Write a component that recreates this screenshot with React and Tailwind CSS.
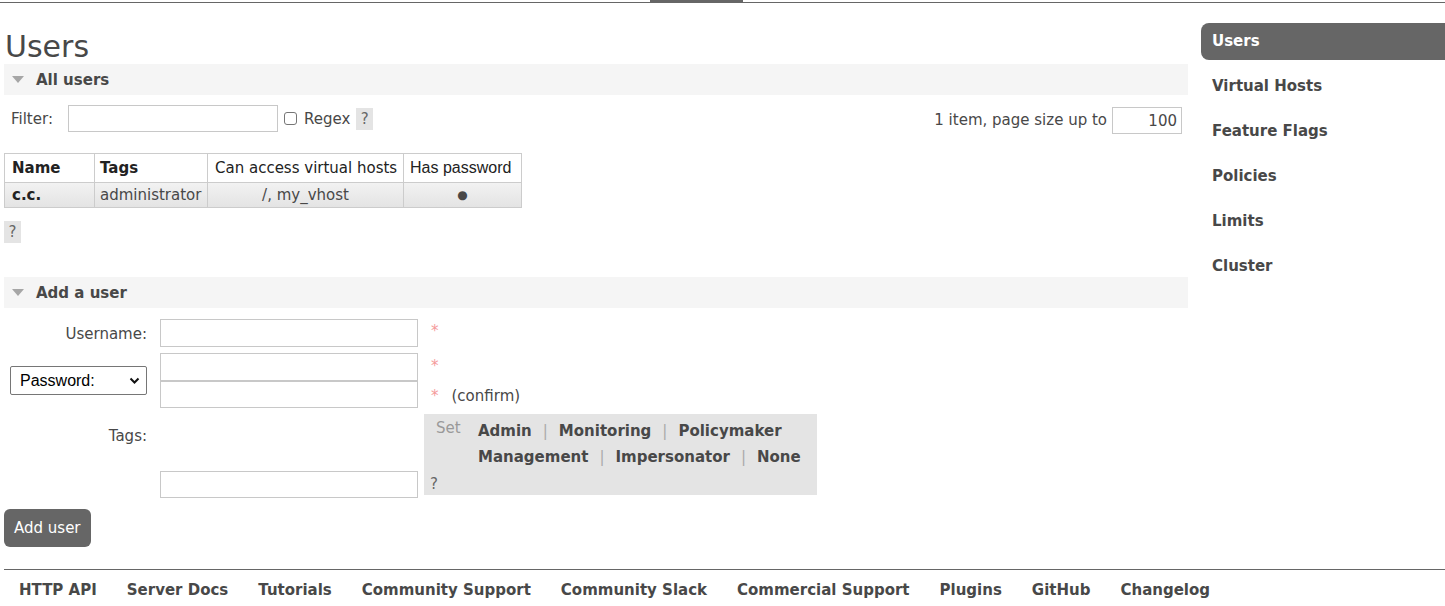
import React from "react";

const font = { fontFamily: '"DejaVu Sans", Verdana, sans-serif' };

function SectionHeader({ title }) {
  return (
    <div className="h-[31px] bg-[#f5f5f5] flex items-center">
      <div className="ml-[8px] w-0 h-0 border-l-[6px] border-r-[6px] border-t-[7px] border-l-transparent border-r-transparent border-t-[#a6a6a6]" />
      <span className="ml-[12px] mt-[1px] font-bold text-[15px] text-[#484848]">{title}</span>
    </div>
  );
}

function Help({ className = "" }) {
  return (
    <span className={"inline-flex w-[17px] h-[22px] bg-[#e4e4e4] items-center justify-center text-[15px] text-[#666] " + className}>?</span>
  );
}

function Star() {
  return <span className="text-[#f59a9a] text-[15px] leading-none">*</span>;
}

const inputCls = "block bg-white border border-[#c8c8c8] outline-none";

function Links({ items }) {
  return (
    <div className="leading-[26px] whitespace-nowrap">
      {items.map((t, i) => (
        <span key={t}>
          {i > 0 && <span className="mx-[11px] font-normal text-[#aaa]">|</span>}
          {t}
        </span>
      ))}
    </div>
  );
}

export default function App() {
  const sidebar = ["Users", "Virtual Hosts", "Feature Flags", "Policies", "Limits", "Cluster"];
  const footer = ["HTTP API", "Server Docs", "Tutorials", "Community Support", "Community Slack", "Commercial Support", "Plugins", "GitHub", "Changelog"];

  return (
    <div className="w-[1445px] h-[606px] overflow-hidden bg-white text-[#484848] text-[15px]" style={font}>
      {/* top line with tab indicator */}
      <div className="relative h-[3px]">
        <div className="absolute left-0 right-0 top-[2px] h-[1px] bg-[#666]" />
        <div className="absolute left-[650px] top-0 w-[93px] h-[3px] bg-[#666]" />
      </div>

      <div className="flex pl-[4px]">
        {/* main */}
        <div className="w-[1184px]">
          <h1 className="mt-[27px] h-[34px] leading-[34px] text-[30px] font-normal pl-[1px]">Users</h1>
          <SectionHeader title="All users" />

          <div className="mt-[10px] h-[27px] flex items-center">
            <span className="ml-[7px] w-[47px] mt-[2px]">Filter:</span>
            <input className={inputCls + " ml-[10px] w-[210px] h-[27px]"} />
            <span className="ml-[6px] w-[13px] h-[13px] border border-[#767676] rounded-[3px] bg-white" />
            <span className="ml-[7px] mt-[1px]">Regex</span>
            <Help className="ml-[6px] mt-[1px]" />
            <div className="flex-1" />
            <span className="mt-[4px]">1 item, page size up to</span>
            <input className={inputCls + " ml-[5px] mr-[6px] mt-[4px] w-[70px] h-[27px] text-right pr-[4px] text-[15px] text-[#484848]"} defaultValue="100" style={font} />
          </div>

          <table className="mt-[21px] border-collapse text-[15px]">
            <thead>
              <tr className="h-[29px] bg-white">
                <th className="w-[90px] border border-[#cccccc] text-left font-bold pl-[7px] text-[#222]">Name</th>
                <th className="w-[113px] border border-[#cccccc] text-left font-bold pl-[5px] text-[#222]">Tags</th>
                <th className="w-[196px] border border-[#cccccc] text-left font-normal pl-[7px] text-[#222]">Can access virtual hosts</th>
                <th className="w-[118px] border border-[#cccccc] text-left font-normal pl-[6px] text-[#222] text-[16px]" style={{ fontFamily: '"Liberation Sans", Arial, sans-serif' }}>Has password</th>
              </tr>
            </thead>
            <tbody>
              <tr className="h-[25px] bg-[linear-gradient(#f2f2f2,#e3e3e3)]">
                <td className="border border-[#cccccc] pl-[7px] font-bold text-[#222]">c.c.</td>
                <td className="border border-[#cccccc] pl-[5px]">administrator</td>
                <td className="border border-[#cccccc] text-center">/, my_vhost</td>
                <td className="border border-[#cccccc] text-center text-[12px]">●</td>
              </tr>
            </tbody>
          </table>

          <Help className="mt-[13px]" />

          <div className="mt-[34px]">
            <SectionHeader title="Add a user" />
          </div>

          {/* form */}
          <div className="mt-[11px]">
            <div className="flex items-center">
              <div className="w-[143px] text-right mt-[2px]">Username:</div>
              <input className={inputCls + " ml-[13px] w-[258px] h-[28px]"} />
              <span className="ml-[13px] -mt-[5px]"><Star /></span>
            </div>

            <div className="mt-[6px] flex items-center">
              <div className="w-[143px] flex">
                <div className="ml-[6px] w-[137px] h-[29px] border border-[#767676] rounded-[2px] bg-white flex items-center pl-[9px] pr-[6px] text-[16px] text-black" style={{ fontFamily: '"Liberation Sans", Arial, sans-serif' }}>
                  <span className="flex-1">Password:</span>
                  <svg width="11" height="8" viewBox="0 0 11 8" fill="none"><path d="M1.5 1.5 L5.5 5.5 L9.5 1.5" stroke="#111" strokeWidth="2" /></svg>
                </div>
              </div>
              <div className="ml-[13px] flex flex-col">
                <div className="flex items-center">
                  <input className={inputCls + " w-[258px] h-[28px]"} />
                  <span className="ml-[13px] -mt-[2px]"><Star /></span>
                </div>
                <div className="flex items-center">
                  <input className={inputCls + " w-[258px] h-[27px]"} />
                  <span className="ml-[13px] mt-[2px]"><Star /></span>
                  <span className="ml-[13px] mt-[2px]">(confirm)</span>
                </div>
              </div>
            </div>

            <div className="mt-[6px] h-[84px] flex items-start">
              <div className="w-[143px] text-right pt-[11px]">Tags:</div>
              <div className="ml-[13px] self-end">
                <input className={inputCls + " w-[258px] h-[27px]"} />
              </div>
              <div className="ml-[6px] w-[393px] h-[81px] bg-[#e4e4e4] pl-[6px] pt-[4px]">
                <div className="flex">
                  <span className="ml-[6px] w-[42px] text-[#999] leading-[26px] -mt-[3px]">Set</span>
                  <div className="font-bold text-[#484848]">
                    <Links items={["Admin", "Monitoring", "Policymaker"]} />
                    <Links items={["Management", "Impersonator", "None"]} />
                  </div>
                </div>
                <div className="leading-[20px] text-[#666] mt-[4px]">?</div>
              </div>
            </div>

            <button className="mt-[11px] w-[87px] h-[38px] bg-[#666] rounded-[6px] text-white text-[15px] text-left pl-[10px]" style={font}>Add user</button>
          </div>
        </div>

        {/* sidebar */}
        <div className="ml-[13px] flex-1 pt-[20px]">
          {sidebar.map((s, i) => (
            <div
              key={s}
              className={
                "h-[37px] mb-[8px] flex items-center pl-[11px] font-bold text-[15px] " +
                (i === 0 ? "bg-[#666] text-white rounded-l-[8px]" : "text-[#484848]")
              }
            >
              {s}
            </div>
          ))}
        </div>
      </div>

      {/* footer */}
      <div className="ml-[4px] mt-[22px] border-t border-[#666] flex pt-[11px]">
        {footer.map((f) => (
          <span key={f} className="px-[15px] font-bold text-[15px] leading-[18px] text-[#484848]">{f}</span>
        ))}
      </div>
    </div>
  );
}
